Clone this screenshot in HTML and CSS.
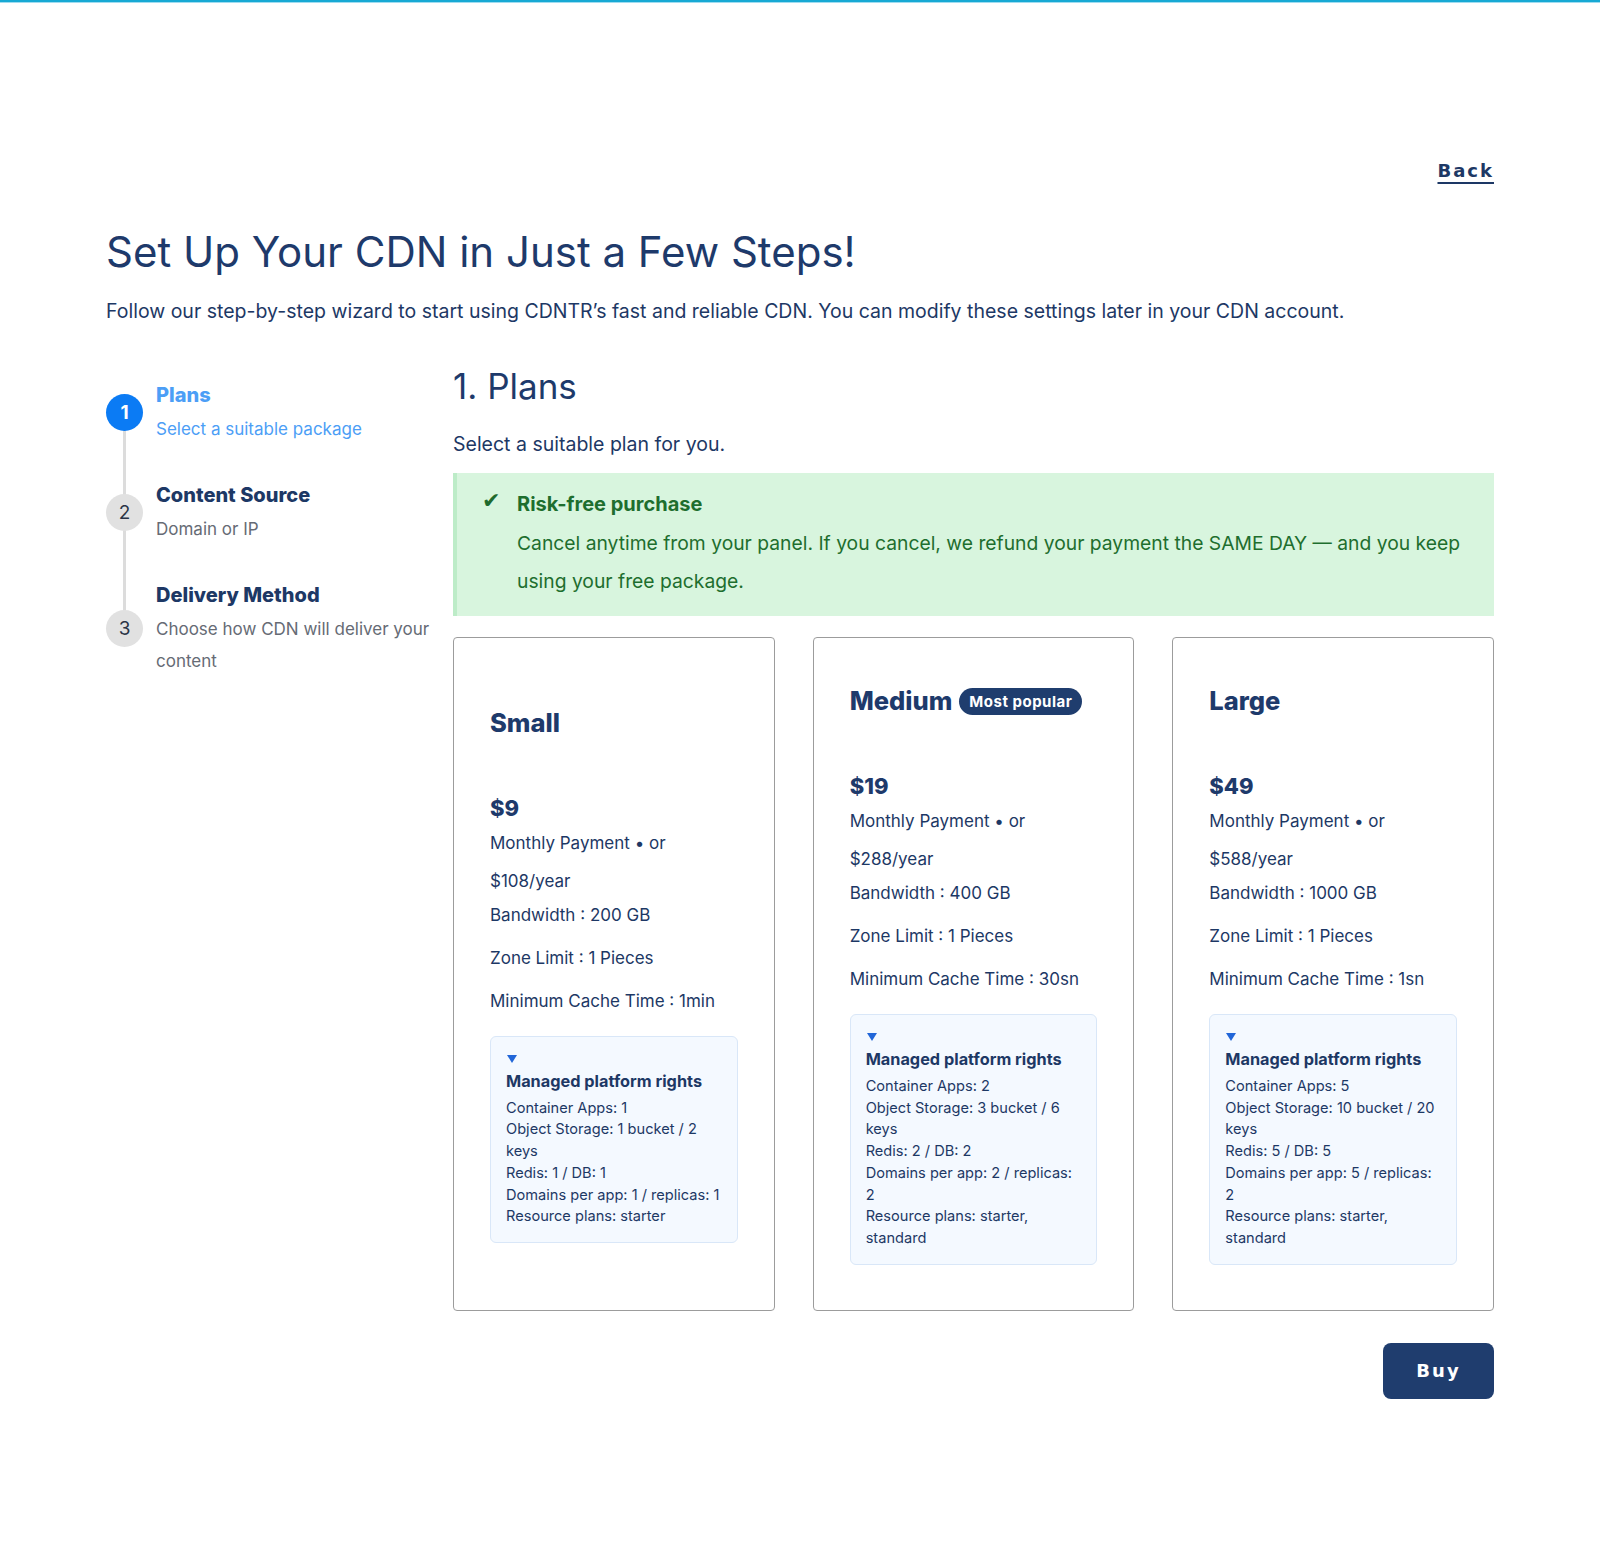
FILE: index.html
```html
<!DOCTYPE html>
<html lang="en">
<head>
<meta charset="utf-8">
<title>CDN Setup Wizard</title>
<link rel="stylesheet" href="styles.css">
</head>
<body>
<div class="topline"></div>
<main class="wrap">
  <div class="back-row"><a class="back" href="#">Back</a></div>
  <h1 class="title">Set Up Your CDN in Just a Few Steps!</h1>
  <p class="lead">Follow our step-by-step wizard to start using CDNTR’s fast and reliable CDN. You can modify these settings later in your CDN account.</p>

  <div class="wizard">
    <ol class="steps">
      <li class="step active">
        <span class="dot">1</span>
        <div class="step-text">
          <div class="step-name">Plans</div>
          <div class="step-desc">Select a suitable package</div>
        </div>
      </li>
      <li class="step">
        <span class="dot">2</span>
        <div class="step-text">
          <div class="step-name">Content Source</div>
          <div class="step-desc">Domain or IP</div>
        </div>
      </li>
      <li class="step">
        <span class="dot">3</span>
        <div class="step-text">
          <div class="step-name">Delivery Method</div>
          <div class="step-desc">Choose how CDN will deliver your content</div>
        </div>
      </li>
    </ol>

    <section class="panel">
      <h2 class="panel-title">1. Plans</h2>
      <p class="panel-sub">Select a suitable plan for you.</p>

      <div class="notice">
        <span class="check">✔</span>
        <div>
          <div class="notice-title">Risk-free purchase</div>
          <p class="notice-body">Cancel anytime from your panel. If you cancel, we refund your payment the SAME DAY — and you keep using your free package.</p>
        </div>
      </div>

      <div class="plans">
        <article class="plan">
          <h3 class="plan-name">Small</h3>
          <div class="price">$9</div>
          <p class="period">Monthly Payment • or $108/year</p>
          <ul class="feats">
            <li>Bandwidth : 200 GB</li>
            <li>Zone Limit : 1 Pieces</li>
            <li>Minimum Cache Time : 1min</li>
          </ul>
          <details class="rights" open>
            <summary><span class="caret"></span><span class="rights-title">Managed platform rights</span></summary>
            <div class="rights-list">
              <div>Container Apps: 1</div>
              <div>Object Storage: 1 bucket / 2 keys</div>
              <div>Redis: 1 / DB: 1</div>
              <div>Domains per app: 1 / replicas: 1</div>
              <div>Resource plans: starter</div>
            </div>
          </details>
        </article>

        <article class="plan">
          <h3 class="plan-name">Medium <span class="badge">Most popular</span></h3>
          <div class="price">$19</div>
          <p class="period">Monthly Payment • or $288/year</p>
          <ul class="feats">
            <li>Bandwidth : 400 GB</li>
            <li>Zone Limit : 1 Pieces</li>
            <li>Minimum Cache Time : 30sn</li>
          </ul>
          <details class="rights" open>
            <summary><span class="caret"></span><span class="rights-title">Managed platform rights</span></summary>
            <div class="rights-list">
              <div>Container Apps: 2</div>
              <div>Object Storage: 3 bucket / 6 keys</div>
              <div>Redis: 2 / DB: 2</div>
              <div>Domains per app: 2 / replicas: 2</div>
              <div>Resource plans: starter, standard</div>
            </div>
          </details>
        </article>

        <article class="plan">
          <h3 class="plan-name">Large</h3>
          <div class="price">$49</div>
          <p class="period">Monthly Payment • or $588/year</p>
          <ul class="feats">
            <li>Bandwidth : 1000 GB</li>
            <li>Zone Limit : 1 Pieces</li>
            <li>Minimum Cache Time : 1sn</li>
          </ul>
          <details class="rights" open>
            <summary><span class="caret"></span><span class="rights-title">Managed platform rights</span></summary>
            <div class="rights-list">
              <div>Container Apps: 5</div>
              <div>Object Storage: 10 bucket / 20 keys</div>
              <div>Redis: 5 / DB: 5</div>
              <div>Domains per app: 5 / replicas: 2</div>
              <div>Resource plans: starter, standard</div>
            </div>
          </details>
        </article>
      </div>

      <div class="actions"><button class="buy" type="button">Buy</button></div>
    </section>
  </div>
</main>
</body>
</html>
```

FILE: styles.css
```css
* { box-sizing: border-box; }

html, body {
  margin: 0;
  padding: 0;
  background: #fff;
}

body {
  font-family: Inter, "Noto Sans", sans-serif;
  color: #1d3865;
}

/* thin accent line across the top of the page */
.topline {
  height: 3px;
  background: #17a9d4;
  border-bottom: 1px solid #9fdcf0;
}

.wrap {
  width: 1388px;
  margin: 0 auto;
  padding-bottom: 150px;
}

.back-row {
  display: flex;
  justify-content: flex-end;
  padding-top: 156px;
}

.back {
  font-family: "DejaVu Sans", Verdana, sans-serif;
  font-weight: 700;
  font-size: 18px;
  letter-spacing: 2px;
  color: #1d3865;
  text-decoration: underline;
  text-underline-offset: 5px;
  text-decoration-thickness: 2px;
  line-height: 24px;
}

.title {
  margin: 43px 0 0;
  font-size: 42px;
  font-weight: 400;
  line-height: 52px;
  color: #1e3a6b;
}

.lead {
  margin: 19px 0 0;
  font-size: 19.5px;
  line-height: 28px;
  color: #1d3865;
}

/* wizard: step list on the left, current step on the right */
.wizard {
  display: grid;
  grid-template-columns: 1fr 3fr;
  margin-top: 41px;
}

.steps {
  align-self: start;
  list-style: none;
  margin: 17px 0 0;
  padding: 0;
  position: relative;
  display: flex;
  flex-direction: column;
  gap: 38px;
}

.steps::before {
  content: "";
  position: absolute;
  left: 17px;
  top: 30px;
  bottom: 50px;
  width: 3px;
  background: #dcdcdc;
}

.step {
  display: flex;
  align-items: center;
  gap: 13px;
  position: relative;
}

.dot {
  flex: none;
  width: 37px;
  height: 37px;
  margin-top: -4px;
  border-radius: 50%;
  background: #e1e1e1;
  color: #2a3446;
  display: flex;
  align-items: center;
  justify-content: center;
  font-size: 19px;
  position: relative;
  z-index: 1;
}

.step.active .dot {
  background: #0b7bf4;
  color: #fff;
  font-weight: 700;
}

.step-name {
  font-size: 20px;
  font-weight: 800;
  line-height: 24px;
  color: #1d3865;
  margin-bottom: 6px;
}

.step-desc {
  font-size: 17px;
  line-height: 32px;
  color: #666b75;
}

.step.active .step-name,
.step.active .step-desc {
  color: #4c9ef6;
}

.panel-title {
  margin: 0;
  font-size: 35px;
  font-weight: 400;
  line-height: 40px;
  color: #1e3a6b;
}

.panel-sub {
  margin: 24px 0 0;
  font-size: 19.5px;
  line-height: 28px;
}

.notice {
  margin-top: 15px;
  display: flex;
  gap: 17px;
  background: #d8f5de;
  border-left: 4px solid #bdecc8;
  padding: 15px 30px 16px 25px;
  color: #1e6e2e;
}

.check {
  font-size: 22px;
  line-height: 24px;
  color: #1f6a2d;
}

.notice-title {
  font-size: 20px;
  font-weight: 700;
  line-height: 32px;
}

.notice-body {
  margin: 4px 0 0;
  font-size: 19.3px;
  line-height: 38px;
}

.plans {
  margin-top: 21px;
  display: grid;
  grid-template-columns: repeat(3, 1fr);
  gap: 38px;
}

.plan {
  border: 1px solid #9c9c9c;
  border-radius: 4px;
  padding: 45px 36px;
  display: flex;
  flex-direction: column;
  justify-content: center;
}

.plan-name {
  margin: 0;
  font-size: 25.5px;
  font-weight: 800;
  line-height: 36px;
  color: #1e3a6b;
  display: flex;
  align-items: center;
  gap: 7px;
}

.badge {
  font-size: 15px;
  font-weight: 700;
  line-height: 27px;
  padding: 0 10px;
  border-radius: 14px;
  background: #1f3d6e;
  color: #fff;
  letter-spacing: 0.5px;
}

.price {
  margin-top: 52px;
  font-size: 22px;
  font-weight: 800;
  line-height: 30px;
  color: #1e3a6b;
}

.period {
  margin: 1px 0 0;
  font-size: 17px;
  line-height: 38px;
}

.feats {
  list-style: none;
  margin: 2px 0 0;
  padding: 0;
  font-size: 17px;
  line-height: 26px;
}

.feats li + li {
  margin-top: 17px;
}

.rights {
  margin-top: 22px;
  background: #f4f9ff;
  border: 1px solid #d9e7f8;
  border-radius: 6px;
  padding: 12px 15px 14px;
}

.rights summary {
  list-style: none;
  display: block;
  cursor: pointer;
}

.rights summary::-webkit-details-marker { display: none; }

.caret {
  display: block;
  width: 0;
  height: 0;
  border-left: 5px solid transparent;
  border-right: 5px solid transparent;
  border-top: 8px solid #2166d8;
  margin: 6px 0 7px 1px;
}

.rights-title {
  display: block;
  font-size: 16.3px;
  font-weight: 700;
  line-height: 22px;
  margin-bottom: 6px;
}

.rights-list {
  font-size: 14.6px;
  line-height: 21.7px;
}

.actions {
  display: flex;
  justify-content: flex-end;
  margin-top: 32px;
}

.buy {
  width: 111px;
  height: 56px;
  border: none;
  border-radius: 8px;
  background: #1f3d6e;
  color: #fff;
  font-family: "DejaVu Sans", Verdana, sans-serif;
  font-weight: 700;
  font-size: 18px;
  letter-spacing: 2px;
  cursor: pointer;
}
```
